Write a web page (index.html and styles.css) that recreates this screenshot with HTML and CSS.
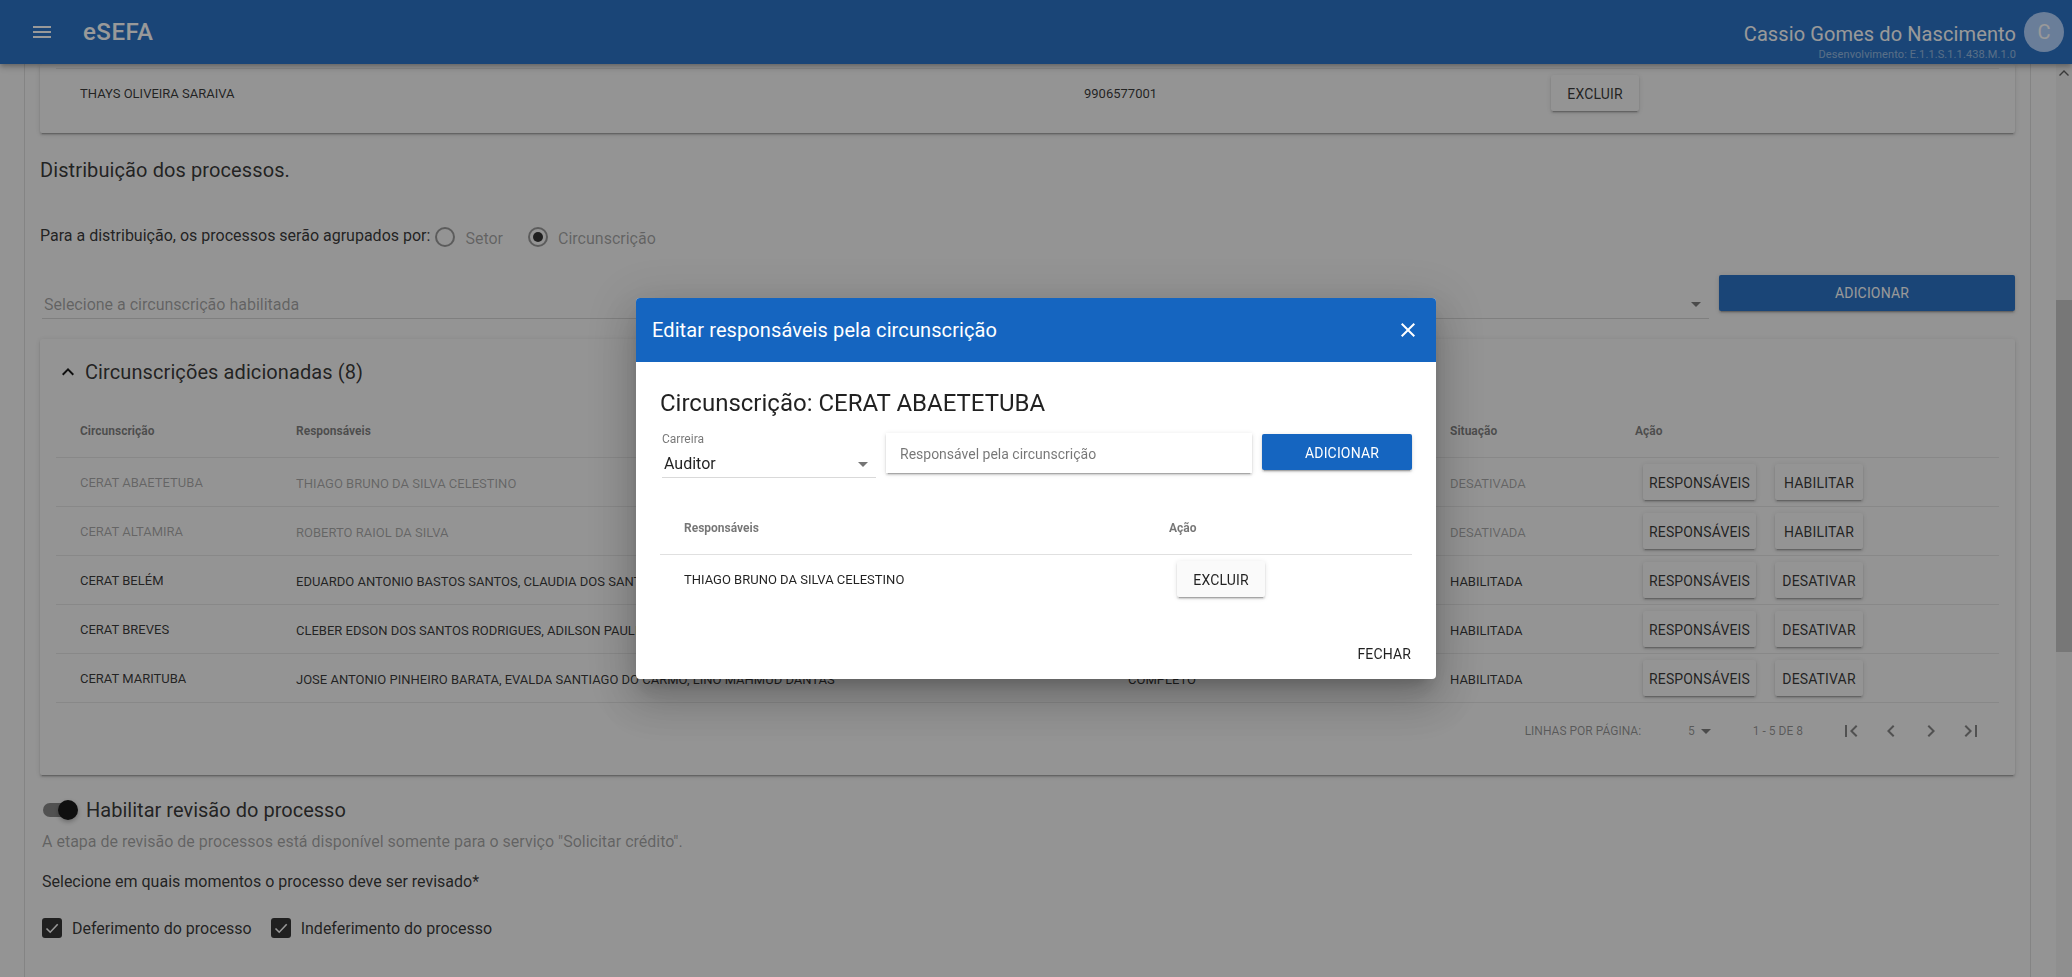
FILE: index.html
```html
<!DOCTYPE html>
<html lang="pt-BR">
<head>
<meta charset="utf-8">
<title>eSEFA</title>
<link rel="stylesheet" href="styles.css">
</head>
<body>
<header class="appbar">
  <svg class="menu-icon" viewBox="0 0 24 24" width="24" height="24"><path d="M3 18h18v-2H3v2zm0-5h18v-2H3v2zm0-7v2h18V6H3z"/></svg>
  <div class="brand">eSEFA</div>
  <div class="spacer"></div>
  <div class="user">
    <div class="user-name">Cassio Gomes do Nascimento</div>
    <div class="user-version">Desenvolvimento: E.1.1.S.1.1.438.M.1.0</div>
  </div>
  <div class="avatar">C</div>
</header>
<div class="viewport">
  <main class="page">
    <section class="sheet">
      <div class="card card-top">
        <div class="top-row">
          <span class="cell-name">THAYS OLIVEIRA SARAIVA</span>
          <span class="cell-number">9906577001</span>
          <span class="cell-top-action"><button class="btn">EXCLUIR</button></span>
        </div>
      </div>

      <h2 class="section-title">Distribuição dos processos.</h2>

      <div class="radio-line">
        <span class="radio-intro">Para a distribuição, os processos serão agrupados por:</span>
        <span class="radio"></span><span class="radio-label">Setor</span>
        <span class="radio radio-on"></span><span class="radio-label">Circunscrição</span>
      </div>

      <div class="select-line">
        <div class="select">
          <span class="select-placeholder">Selecione a circunscrição habilitada</span>
          <span class="caret"></span>
        </div>
        <button class="btn btn-primary btn-wide">ADICIONAR</button>
      </div>

      <div class="card card-table">
        <div class="card-head">
          <svg class="chevron" viewBox="0 0 24 24" width="24" height="24"><path d="M7.41 15.41L12 10.83l4.59 4.58L18 14l-6-6-6 6z"/></svg>
          <span>Circunscrições adicionadas (8)</span>
        </div>
        <div class="grid-table">
          <div class="tr th-row">
            <span class="c1">Circunscrição</span><span class="c2">Responsáveis</span><span class="c3"></span><span class="c4">Situação</span><span class="c5">Ação</span>
          </div>
          <div class="tr row-off">
            <span class="c1">CERAT ABAETETUBA</span><span class="c2">THIAGO BRUNO DA SILVA CELESTINO</span><span class="c3"></span><span class="c4">DESATIVADA</span>
            <span class="c5 actions"><button class="btn btn-narrow">RESPONSÁVEIS</button><button class="btn">HABILITAR</button></span>
          </div>
          <div class="tr row-off">
            <span class="c1">CERAT ALTAMIRA</span><span class="c2">ROBERTO RAIOL DA SILVA</span><span class="c3"></span><span class="c4">DESATIVADA</span>
            <span class="c5 actions"><button class="btn btn-narrow">RESPONSÁVEIS</button><button class="btn">HABILITAR</button></span>
          </div>
          <div class="tr">
            <span class="c1">CERAT BELÉM</span><span class="c2">EDUARDO ANTONIO BASTOS SANTOS, CLAUDIA DOS SANTOS</span><span class="c3"></span><span class="c4">HABILITADA</span>
            <span class="c5 actions"><button class="btn btn-narrow">RESPONSÁVEIS</button><button class="btn">DESATIVAR</button></span>
          </div>
          <div class="tr">
            <span class="c1">CERAT BREVES</span><span class="c2">CLEBER EDSON DOS SANTOS RODRIGUES, ADILSON PAULINO</span><span class="c3"></span><span class="c4">HABILITADA</span>
            <span class="c5 actions"><button class="btn btn-narrow">RESPONSÁVEIS</button><button class="btn">DESATIVAR</button></span>
          </div>
          <div class="tr">
            <span class="c1">CERAT MARITUBA</span><span class="c2">JOSE ANTONIO PINHEIRO BARATA, EVALDA SANTIAGO DO CARMO, LINO MAHMUD DANTAS</span><span class="c3">COMPLETO</span><span class="c4">HABILITADA</span>
            <span class="c5 actions"><button class="btn btn-narrow">RESPONSÁVEIS</button><button class="btn">DESATIVAR</button></span>
          </div>
        </div>
        <div class="pager">
          <span class="pager-label">LINHAS POR PÁGINA:</span>
          <span class="pager-size">5<span class="caret caret-small"></span></span>
          <span class="pager-range">1 - 5 DE 8</span>
          <span class="pager-icons">
            <svg viewBox="0 0 24 24" width="24" height="24"><path d="M18.41 16.59L13.82 12l4.59-4.59L17 6l-6 6 6 6zM6 6h2v12H6z"/></svg>
            <svg viewBox="0 0 24 24" width="24" height="24"><path d="M15.41 7.41L14 6l-6 6 6 6 1.41-1.41L10.83 12z"/></svg>
            <svg viewBox="0 0 24 24" width="24" height="24"><path d="M10 6L8.59 7.41 13.17 12l-4.58 4.59L10 18l6-6z"/></svg>
            <svg viewBox="0 0 24 24" width="24" height="24"><path d="M5.59 7.41L10.18 12l-4.59 4.59L7 18l6-6-6-6zM16 6h2v12h-2z"/></svg>
          </span>
        </div>
      </div>

      <div class="switch-line">
        <span class="switch"><span class="switch-thumb"></span></span>
        <span class="switch-label">Habilitar revisão do processo</span>
      </div>
      <p class="hint">A etapa de revisão de processos está disponível somente para o serviço "Solicitar crédito".</p>
      <p class="question">Selecione em quais momentos o processo deve ser revisado*</p>
      <div class="checks">
        <svg class="check" viewBox="0 0 20 20" width="20" height="20"><rect width="20" height="20" rx="3"/><path class="check-mark" d="M4.5 10.5l3.7 3.7 7.5-8"/></svg>
        <span class="check-label">Deferimento do processo</span>
        <svg class="check" viewBox="0 0 20 20" width="20" height="20"><rect width="20" height="20" rx="3"/><path class="check-mark" d="M4.5 10.5l3.7 3.7 7.5-8"/></svg>
        <span class="check-label">Indeferimento do processo</span>
      </div>
    </section>
  </main>
  <aside class="scrollbar">
    <svg class="scroll-up" viewBox="0 0 10 6" width="10" height="6"><path d="M5 0l5 5-1 1-4-4-4 4-1-1z"/></svg>
    <div class="scroll-thumb"></div>
  </aside>
</div>

<div class="overlay"></div>

<div class="dialog">
  <div class="dialog-head">
    <span>Editar responsáveis pela circunscrição</span>
    <svg viewBox="0 0 24 24" width="24" height="24"><path d="M19 6.41L17.59 5 12 10.59 6.41 5 5 6.41 10.59 12 5 17.59 6.41 19 12 13.41 17.59 19 19 17.59 13.41 12z"/></svg>
  </div>
  <div class="dialog-body">
    <h3 class="dialog-title">Circunscrição: CERAT ABAETETUBA</h3>
    <div class="dialog-form">
      <div class="d-select">
        <span class="d-select-label">Carreira</span>
        <span class="d-select-value">Auditor<span class="caret"></span></span>
      </div>
      <div class="d-input">Responsável pela circunscrição</div>
      <button class="btn btn-primary d-add">ADICIONAR</button>
    </div>
    <div class="d-table">
      <div class="d-head"><span class="d1">Responsáveis</span><span>Ação</span></div>
      <div class="d-row"><span class="d1">THIAGO BRUNO DA SILVA CELESTINO</span><button class="btn d-btn">EXCLUIR</button></div>
    </div>
  </div>
  <div class="dialog-foot"><button class="btn-flat">FECHAR</button></div>
</div>
</body>
</html>
```
FILE: styles.css
```css
* { box-sizing: border-box; }
html, body { margin: 0; height: 100%; overflow: hidden; }
body {
  font-family: Roboto, "Liberation Sans", sans-serif;
  background: #f5f5f5;
  color: rgba(0,0,0,.87);
  display: flex;
  flex-direction: column;
  height: 977px;
}
.appbar {
  height: 64px;
  flex: none;
  background: #1565c0;
  color: #fff;
  display: flex;
  align-items: center;
  padding: 0 8px 0 30px;
  position: relative;
  z-index: 2;
  box-shadow: 0 2px 4px -1px rgba(0,0,0,.2), 0 4px 5px 0 rgba(0,0,0,.14), 0 1px 10px 0 rgba(0,0,0,.12);
}
.menu-icon { fill: #fff; flex: none; }
.brand { margin-left: 29px; font-size: 24px; font-weight: 500; letter-spacing: .5px; }
.spacer { flex: 1; }
.user { display: flex; flex-direction: column; align-items: flex-end; position: relative; align-self: stretch; justify-content: center; }
.user-name { font-size: 20px; line-height: 26px; margin-top: 3px; letter-spacing: .1px; }
.user-version { font-size: 11px; letter-spacing: .1px; color: rgba(255,255,255,.5); position: absolute; right: 0; top: 48px; white-space: nowrap; }
.avatar {
  width: 40px; height: 40px; border-radius: 50%;
  background: #a9cdff;
  margin-left: 8px;
  display: flex; align-items: center; justify-content: center;
  font-size: 20px;
}
.viewport { flex: 1; display: flex; min-height: 0; }
.page { flex: 1; min-width: 0; overflow: hidden; padding: 0 25px 0 24px; }
.sheet {
  background: #f5f5f5;
  border-left: 1px solid #d8d8d8;
  border-right: 1px solid #d8d8d8;
  padding: 0 15px;
  height: 100%;
}
.scrollbar { width: 16px; flex: none; background: #ededed; display: flex; flex-direction: column; align-items: center; }
.scroll-up { fill: #505050; margin-top: 6px; }
.scroll-thumb { width: 16px; height: 352px; background: #c1c1c1; margin-top: 224px; }

.card { background: #f5f5f5; border-radius: 2px; box-shadow: 0 3px 1px -2px rgba(0,0,0,.2), 0 2px 2px 0 rgba(0,0,0,.14), 0 1px 5px 0 rgba(0,0,0,.12); }
.card-top { height: 69px; padding: 4px 16px 0; }
.top-row { border-top: 1px solid #e0e0e0; height: 49px; display: flex; align-items: center; font-size: 13px; padding-left: 24px; }
.cell-name { width: 1004px; }
.cell-number { width: 467px; }
.btn {
  font-family: inherit;
  height: 36px; min-width: 88px;
  padding: 2px 6px 0;
  border: 0; border-radius: 2px;
  font-size: 14px; font-weight: 400; letter-spacing: .15px;
  background: #f5f5f5;
  color: rgba(0,0,0,.87);
  box-shadow: 0 3px 1px -2px rgba(0,0,0,.2), 0 2px 2px 0 rgba(0,0,0,.14), 0 1px 5px 0 rgba(0,0,0,.12);
}
.btn-narrow { min-width: 113px; }
.btn-primary { background: #1565c0; color: #fff; padding: 0 0 0 10px; }
.btn-wide { width: 296px; flex: none; }
.btn-flat { font-family: inherit; border: 0; background: none; font-size: 14px; font-weight: 400; letter-spacing: .15px; color: rgba(0,0,0,.87); padding: 0 1px 0 0; }

.section-title { margin: 0; font-size: 20px; font-weight: 400; letter-spacing: .1px; line-height: 28px; padding-top: 23px; height: 51px; }
.radio-line { display: flex; align-items: center; height: 32px; margin-top: 37px; font-size: 16px; }
.radio-intro { margin-right: 5px; position: relative; top: -2px; }
.radio { width: 20px; height: 20px; border-radius: 50%; border: 2px solid rgba(0,0,0,.42); flex: none; display: flex; align-items: center; justify-content: center; }
.radio-on::after { content: ""; width: 10px; height: 10px; border-radius: 50%; background: rgba(0,0,0,.87); }
.radio-label { color: rgba(0,0,0,.38); margin-left: 10px; margin-right: 25px; position: relative; top: 1px; }
.select-line { display: flex; align-items: flex-start; gap: 10px; margin-top: 22px; height: 64px; }
.select { flex: 1; height: 44px; margin-left: 2px; border-bottom: 1px solid rgba(0,0,0,.15); display: flex; align-items: center; justify-content: space-between; padding: 16px 8px 0 2px; font-size: 16px; color: rgba(0,0,0,.38); }
.caret { display: inline-block; width: 0; height: 0; border-left: 5px solid transparent; border-right: 5px solid transparent; border-top: 5px solid rgba(0,0,0,.54); }
.card-table { height: 436px; display: flex; flex-direction: column; padding: 0 16px; }
.card-head { display: flex; align-items: center; height: 65px; font-size: 20px; letter-spacing: .09px; }
.chevron { margin-right: 5px; flex: none; }
.tr { display: flex; height: 49px; align-items: center; border-bottom: 1px solid #e0e0e0; font-size: 13px; }
.th-row { height: 54px; font-size: 12px; font-weight: 700; color: rgba(0,0,0,.54); }
.row-off { color: rgba(0,0,0,.36); }
.tr > span { flex: none; white-space: nowrap; }
.c1 { width: 240px; padding-left: 24px; }
.c2 { width: 832px; padding-top: 2px; }
.c3 { width: 322px; padding-top: 2px; }
.c4 { width: 185px; padding-top: 2px; }
.c5 { width: 300px; }
.th-row .c2, .th-row .c3, .th-row .c4 { padding-top: 0; }
.actions { display: flex; gap: 19px; padding-left: 8px; }
.pager { height: 56px; display: flex; align-items: center; justify-content: flex-end; font-size: 12px; color: rgba(0,0,0,.45); }
.pager-label { margin-right: 47px; }
.pager-size { display: flex; align-items: center; gap: 6px; margin-right: 42px; }
.pager-range { margin-right: 36px; }
.pager-icons { display: flex; gap: 16px; padding-right: 16px; }
.pager-icons svg { fill: rgba(0,0,0,.5); }

.switch-line { display: flex; align-items: center; margin-top: 20px; height: 30px; padding-left: 3px; }
.switch { width: 28px; height: 14px; border-radius: 8px; background: rgba(0,0,0,.5); position: relative; flex: none; }
.switch-thumb { position: absolute; right: -7px; top: -3px; width: 20px; height: 20px; border-radius: 50%; background: #000; box-shadow: 0 2px 4px rgba(0,0,0,.3); }
.switch-label { font-size: 20px; margin-left: 15px; letter-spacing: .02px; }
.hint { margin: 5px 0 0 2px; font-size: 16px; line-height: 24px; color: rgba(0,0,0,.38); }
.question { margin: 16px 0 0 2px; font-size: 16px; line-height: 24px; }
.checks { display: flex; align-items: center; margin: 24px 0 0 2px; font-size: 16px; }
.check { flex: none; }
.check rect { fill: rgba(0,0,0,.87); }
.check-mark { fill: none; stroke: #fff; stroke-width: 1.6; }
.check-label { margin: 0 19px 0 10px; }

.overlay { position: fixed; inset: 0; background: rgba(33,33,33,.46); z-index: 5; }
.dialog {
  position: fixed; left: 636px; top: 298px; width: 800px; height: 381px;
  background: #fff; border-radius: 4px; overflow: hidden; z-index: 6;
  display: flex; flex-direction: column;
  box-shadow: 0 11px 15px -7px rgba(0,0,0,.2), 0 24px 38px 3px rgba(0,0,0,.14), 0 9px 46px 8px rgba(0,0,0,.12);
}
.dialog-head { height: 64px; flex: none; background: #1565c0; color: #fff; display: flex; align-items: center; justify-content: space-between; padding: 0 16px; font-size: 20px; font-weight: 400; letter-spacing: .1px; }
.dialog-head svg { fill: #fff; }
.dialog-body { flex: 1; padding: 24px 24px 0; }
.dialog-title { margin: 0; font-size: 24px; font-weight: 400; line-height: 34px; }
.dialog-form { display: flex; margin-top: 13px; align-items: flex-start; }
.d-select { width: 214px; margin-left: 2px; height: 45px; border-bottom: 1px solid rgba(0,0,0,.15); display: flex; flex-direction: column; }
.d-select-label { font-size: 12px; line-height: 14px; color: rgba(0,0,0,.54); margin-top: -1px; }
.d-select-value { display: flex; align-items: center; justify-content: space-between; font-size: 16px; padding: 6px 8px 0 2px; line-height: 24px; }
.d-input { width: 366px; height: 40px; margin-left: 10px; background: #fff; padding: 2px 14px 0; display: flex; align-items: center; font-size: 14px; color: rgba(0,0,0,.54); box-shadow: 0 3px 1px -2px rgba(0,0,0,.2), 0 2px 2px 0 rgba(0,0,0,.14), 0 1px 5px 0 rgba(0,0,0,.12); }
.d-add { width: 150px; margin: 1px 0 0 10px; padding-top: 2px; }
.d-table { margin-top: 24px; }
.d-head { display: flex; align-items: center; height: 53px; border-bottom: 1px solid #e0e0e0; font-size: 12px; font-weight: 700; color: rgba(0,0,0,.54); }
.d1 { width: 509px; padding-left: 24px; }
.d-row { display: flex; align-items: center; height: 48px; font-size: 13px; }
.d-btn { margin-left: 8px; background: #fafafa; }
.dialog-foot { height: 50px; flex: none; display: flex; justify-content: flex-end; align-items: center; padding: 0 24px 0 0; }
```
